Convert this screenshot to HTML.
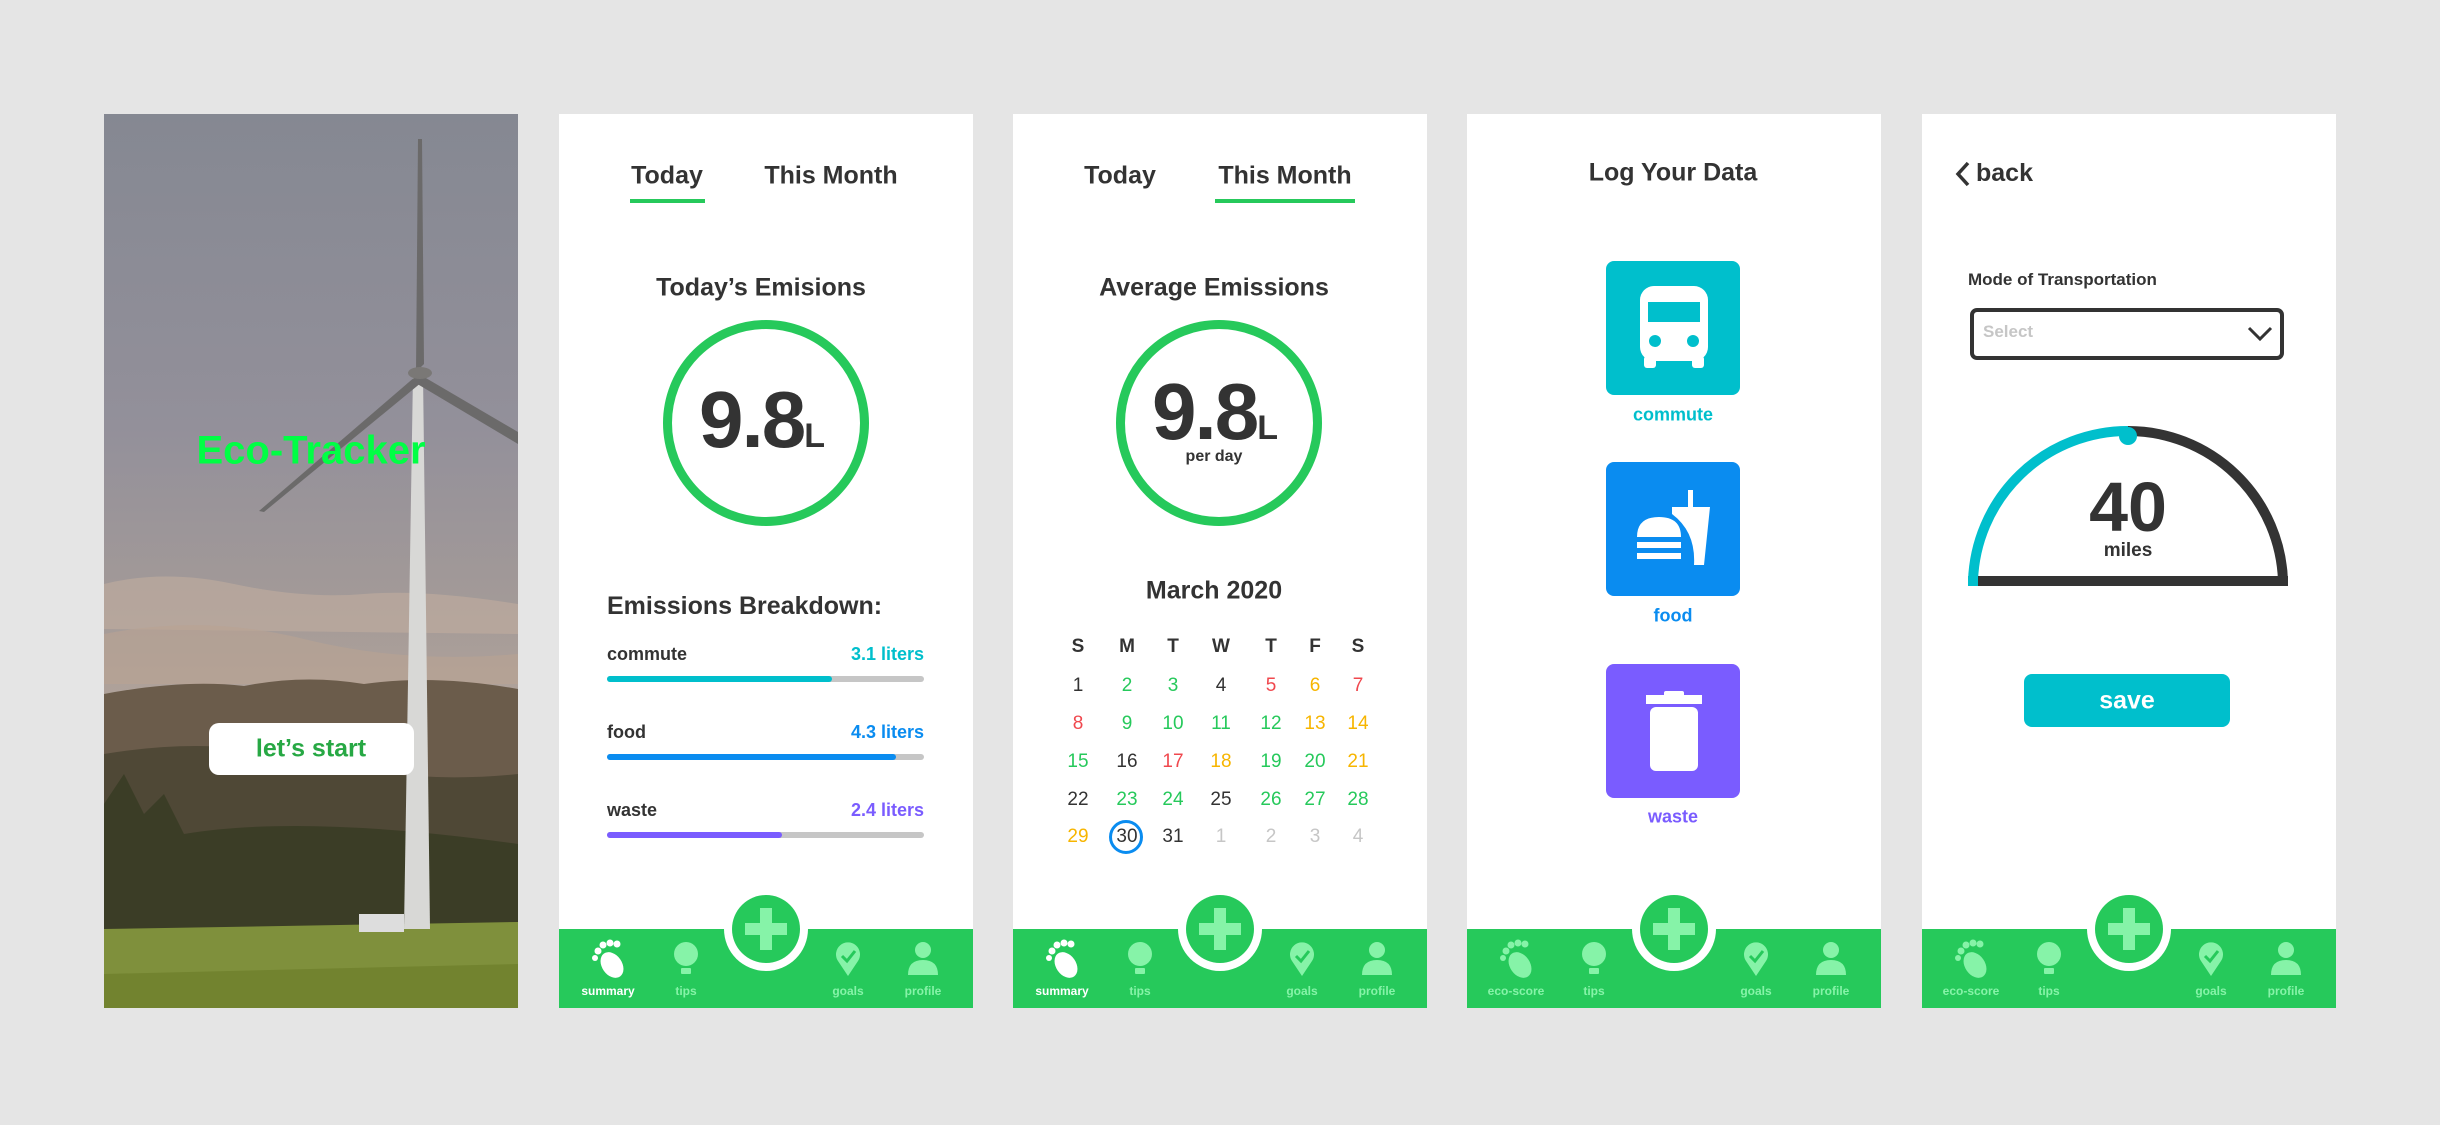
<!DOCTYPE html>
<html><head><meta charset="utf-8"><style>
*{margin:0;padding:0;box-sizing:border-box}
body{width:2440px;height:1125px;background:#e5e5e5;font-family:"Liberation Sans",sans-serif;position:relative;overflow:hidden;color:#333}
.p{position:absolute;top:114px;width:414px;height:894px;background:#fff;overflow:hidden}
.a{position:absolute}
.c{position:absolute;transform:translate(-50%,-50%);white-space:nowrap}
.b{font-weight:bold}
.nav{position:absolute;left:0;top:815px;width:414px;height:79px;background:#26c95b}
.nl{position:absolute;top:62px;transform:translate(-50%,-50%);font-size:12px;font-weight:bold;color:#86f3a8;white-space:nowrap}
.plus{position:absolute;top:-42px;width:84px;height:84px;margin-left:-42px;border-radius:50%;background:#fff}
.plus div{position:absolute;left:8px;top:8px;width:68px;height:68px;border-radius:50%;background:#26c95b}
.tab{font-size:25px;font-weight:bold;top:62px}
.cal{font-size:19px}
</style></head><body>

<!-- Panel 1 -->
<div class="p" style="left:104px;background:linear-gradient(#858892 0%,#93909a 35%,#a39a98 55%,#b3a49a 68%,#a89484 75%)">
<svg class="a" style="left:0;top:0" width="414" height="894">
<path d="M0 470 Q60 455 130 470 T260 480 T414 490 L414 520 L0 515Z" fill="#c2ad9f" opacity=".6"/>
<path d="M0 520 Q100 500 200 525 T414 540 L414 570 L0 570Z" fill="#b9a393" opacity=".6"/>
<path d="M0 580 Q80 565 140 572 Q200 560 260 570 Q330 560 414 575 L414 820 L0 820Z" fill="#6b5c4b"/>
<path d="M0 640 Q120 620 220 650 Q320 670 414 660 L414 820 L0 820Z" fill="#4f4836"/>
<path d="M0 690 L20 660 L40 700 L60 680 L80 720 Q200 700 414 730 L414 820 L0 820Z" fill="#3b3d26"/>
<path d="M0 815 L414 808 L414 894 L0 894Z" fill="#7f903c"/>
<path d="M0 860 L414 850 L414 894 L0 894Z" fill="#72832f"/>
<path d="M309 260 L319 260 L326 815 L300 815Z" fill="#d8d8d6"/>
<path d="M312 258 L314 25 L318 25 L320 250Z" fill="#6b6a6a"/>
<path d="M315 260 L414 318 L414 330 L310 268Z" fill="#6b6a6a"/>
<path d="M312 262 L155 397 L160 398 L318 268Z" fill="#6b6a6a"/>
<ellipse cx="316" cy="259" rx="12" ry="6" fill="#7a7876"/>
<rect x="255" y="800" width="45" height="18" fill="#ddd"/>
</svg>
<div class="c b" style="left:207px;top:337px;font-size:40px;color:#00ff44">Eco-Tracker</div>
<div class="a" style="left:105px;top:609px;width:205px;height:52px;background:#fff;border-radius:10px"></div>
<div class="c b" style="left:207px;top:635px;font-size:25px;color:#27a844">let’s start</div>
</div>

<!-- Panel 2 -->
<div class="p" style="left:559px">
<div class="c tab" style="left:108px">Today</div>
<div class="a" style="left:71px;top:85px;width:75px;height:4px;background:#26c95b"></div>
<div class="c tab" style="left:272px">This Month</div>
<div class="c b" style="left:202px;top:174px;font-size:25px">Today’s Emisions</div>
<div class="a" style="left:104px;top:206px;width:206px;height:206px;border:9px solid #26c95b;border-radius:50%"></div>
<div class="c b" style="left:202px;top:306px;font-size:80px;letter-spacing:-2px">9.8<span style="font-size:34px">L</span></div>
<div class="a b" style="left:48px;top:478px;font-size:25px">Emissions Breakdown:</div>
<div class="a b" style="left:48px;top:530px;font-size:18px">commute</div><div class="a b" style="right:49px;top:530px;font-size:18px;color:#00bfcc">3.1 liters</div>
<div class="a" style="left:48px;top:562px;width:317px;height:6px;border-radius:3px;background:#c6c6c6"><div style="width:225px;height:6px;border-radius:3px;background:#00bfcc"></div></div>
<div class="a b" style="left:48px;top:608px;font-size:18px">food</div><div class="a b" style="right:49px;top:608px;font-size:18px;color:#0a8cf0">4.3 liters</div>
<div class="a" style="left:48px;top:640px;width:317px;height:6px;border-radius:3px;background:#c6c6c6"><div style="width:289px;height:6px;border-radius:3px;background:#0a8cf0"></div></div>
<div class="a b" style="left:48px;top:686px;font-size:18px">waste</div><div class="a b" style="right:49px;top:686px;font-size:18px;color:#7a5cff">2.4 liters</div>
<div class="a" style="left:48px;top:718px;width:317px;height:6px;border-radius:3px;background:#c6c6c6"><div style="width:175px;height:6px;border-radius:3px;background:#7a5cff"></div></div>
NAV1
</div>

<!-- Panel 3 -->
<div class="p" style="left:1013px">
<div class="c tab" style="left:107px">Today</div>
<div class="c tab" style="left:272px">This Month</div>
<div class="a" style="left:202px;top:85px;width:140px;height:4px;background:#26c95b"></div>
<div class="c b" style="left:201px;top:174px;font-size:25px">Average Emissions</div>
<div class="a" style="left:103px;top:206px;width:206px;height:206px;border:9px solid #26c95b;border-radius:50%"></div>
<div class="c b" style="left:201px;top:298px;font-size:80px;letter-spacing:-2px">9.8<span style="font-size:34px">L</span></div>
<div class="c b" style="left:201px;top:343px;font-size:16px">per day</div>
<div class="c b" style="left:201px;top:477px;font-size:25px">March 2020</div>
<div class="a" style="left:96px;top:706px;width:34px;height:34px;border:3px solid #0a8cf0;border-radius:50%"></div>
CAL
NAV1
</div>

<!-- Panel 4 -->
<div class="p" style="left:1467px">
<div class="c b" style="left:206px;top:59px;font-size:25px">Log Your Data</div>
<div class="a" style="left:139px;top:147px;width:134px;height:134px;border-radius:8px;background:#00bfcc">
<svg width="134" height="134"><rect x="34" y="25" width="68" height="75" rx="14" fill="#fff"/><rect x="42" y="41" width="52" height="20" fill="#00bfcc"/><circle cx="49" cy="80" r="6" fill="#00bfcc"/><circle cx="87" cy="80" r="6" fill="#00bfcc"/><rect x="38" y="95" width="12" height="12" rx="3" fill="#fff"/><rect x="86" y="95" width="12" height="12" rx="3" fill="#fff"/></svg></div>
<div class="c b" style="left:206px;top:301px;font-size:18px;color:#00bfcc">commute</div>
<div class="a" style="left:139px;top:348px;width:134px;height:134px;border-radius:8px;background:#0a8cf0">
<svg width="134" height="134"><path d="M31 75 Q31 55 53 55 Q75 55 75 75Z" fill="#fff"/><rect x="31" y="80" width="44" height="6" fill="#fff"/><rect x="31" y="91" width="44" height="6" fill="#fff"/><path d="M66 45 L104 45 L98 103 L88 103 Q90 70 66 52Z" fill="#fff"/><rect x="82" y="28" width="5" height="18" fill="#fff"/></svg></div>
<div class="c b" style="left:206px;top:502px;font-size:18px;color:#0a8cf0">food</div>
<div class="a" style="left:139px;top:550px;width:134px;height:134px;border-radius:8px;background:#7a5cff">
<svg width="134" height="134"><rect x="40" y="31" width="56" height="9" fill="#fff"/><rect x="58" y="27" width="20" height="6" rx="2" fill="#fff"/><rect x="44" y="43" width="48" height="64" rx="6" fill="#fff"/></svg></div>
<div class="c b" style="left:206px;top:703px;font-size:18px;color:#7a5cff">waste</div>
NAV2
</div>

<!-- Panel 5 -->
<div class="p" style="left:1922px">
<svg class="a" style="left:33px;top:47px" width="16" height="26"><path d="M13 2 L3 13 L13 24" stroke="#333" stroke-width="3.5" fill="none"/></svg>
<div class="a b" style="left:54px;top:45px;font-size:25px">back</div>
<div class="a b" style="left:46px;top:156px;font-size:17px">Mode of Transportation</div>
<div class="a" style="left:48px;top:194px;width:314px;height:52px;border:4px solid #333;border-radius:7px"></div>
<div class="a" style="left:61px;top:208px;font-size:17px;color:#c6c6c6;font-weight:bold">Select</div>
<svg class="a" style="left:325px;top:212px" width="26" height="16"><path d="M2 2 L13 13 L24 2" stroke="#333" stroke-width="3" fill="none"/></svg>
<svg class="a" style="left:0;top:0" width="414" height="500">
<path d="M51 467 A155 155 0 0 1 206 317" stroke="#00bfcc" stroke-width="10" fill="none"/>
<path d="M206 317 A155 155 0 0 1 361 467" stroke="#333" stroke-width="10" fill="none"/>
<rect x="51" y="462" width="315" height="10" fill="#333"/>
<rect x="46" y="462" width="10" height="10" fill="#00bfcc"/>
<circle cx="206" cy="322" r="9" fill="#00bfcc"/>
</svg>
<div class="c b" style="left:206px;top:393px;font-size:70px">40</div>
<div class="c b" style="left:206px;top:437px;font-size:19px">miles</div>
<div class="a" style="left:102px;top:560px;width:206px;height:53px;border-radius:8px;background:#00bfcc"></div>
<div class="c b" style="left:205px;top:587px;font-size:25px;color:#fff">save</div>
NAV2
</div>

<script>
function icons(first,label1){
 const g='#86f3a8';
 const foot=`<svg class="a" style="left:${-22}px;top:8px" width="44" height="44"><ellipse cx="26" cy="28" rx="10" ry="14" transform="rotate(-35 26 28)" fill="${first}"/><circle cx="12" cy="14" r="3.5" fill="${first}"/><circle cx="17" cy="8" r="3.5" fill="${first}"/><circle cx="24" cy="6" r="3.5" fill="${first}"/><circle cx="31" cy="7" r="3.5" fill="${first}"/><circle cx="9" cy="21" r="3" fill="${first}"/></svg>`;
 return `<div class="nav">
 <div class="a" style="left:49px;top:0">${foot}</div>
 <div class="nl" style="left:49px;color:${first}">${label1}</div>
 <svg class="a" style="left:113px;top:12px" width="28" height="36"><circle cx="14" cy="13" r="12" fill="${g}"/><rect x="9" y="27" width="10" height="6" rx="1" fill="${g}"/></svg>
 <div class="nl" style="left:127px">tips</div>
 <div class="plus" style="left:207px"><div><svg width="68" height="68"><rect x="28" y="13" width="12" height="42" fill="${g}"/><rect x="13" y="28" width="42" height="12" fill="${g}"/></svg></div></div>
 <svg class="a" style="left:276px;top:12px" width="26" height="36"><path d="M13 35 L3 20 A12 12 0 1 1 23 20Z" fill="${g}"/><path d="M7 15 L12 20 L20 10" stroke="#26c95b" stroke-width="3" fill="none"/></svg>
 <div class="nl" style="left:289px">goals</div>
 <svg class="a" style="left:348px;top:12px" width="32" height="36"><circle cx="16" cy="9" r="8" fill="${g}"/><path d="M1 34 Q1 19 16 19 Q31 19 31 34Z" fill="${g}"/></svg>
 <div class="nl" style="left:364px">profile</div></div>`;
}
const cols=[65,114,160,208,258,302,345],rows=[533,572,610,648,686,723];
const G='#26c95b',R='#f0484e',O='#f7b500',D='#333',L='#c6c6c6';
const days=[['S','M','T','W','T','F','S'],
[['1',D],['2',G],['3',G],['4',D],['5',R],['6',O],['7',R]],
[['8',R],['9',G],['10',G],['11',G],['12',G],['13',O],['14',O]],
[['15',G],['16',D],['17',R],['18',O],['19',G],['20',G],['21',O]],
[['22',D],['23',G],['24',G],['25',D],['26',G],['27',G],['28',G]],
[['29',O],['30',D],['31',D],['1',L],['2',L],['3',L],['4',L]]];
let cal='';
days.forEach((r,i)=>r.forEach((d,j)=>{
 if(i==0)cal+=`<div class="c b cal" style="left:${cols[j]}px;top:${rows[0]}px">${d}</div>`;
 else cal+=`<div class="c cal" style="left:${cols[j]}px;top:${rows[i]}px;color:${d[1]}">${d[0]}</div>`;
}));
document.body.innerHTML=document.body.innerHTML.replace('CAL',cal).split('NAV1').join(icons('#fff','summary')).split('NAV2').join(icons('#86f3a8','eco-score'));
</script>
</body></html>
